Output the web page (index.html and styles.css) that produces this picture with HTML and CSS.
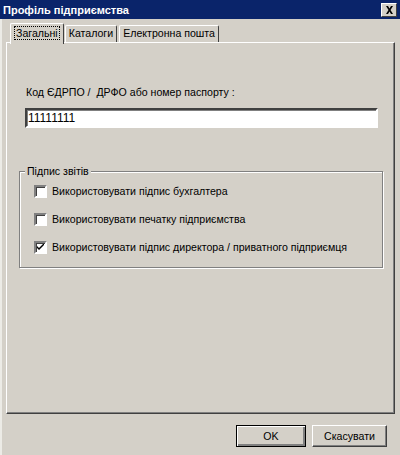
FILE: index.html
```html
<html>
<head>
<meta charset="utf-8">
<link rel="stylesheet" href="styles.css">
</head>
<body>
<div class="window">
  <div class="titlebar">
    <span class="title">Профіль підприємства</span>
    <span class="close">
      <svg width="9" height="8" viewBox="0 0 9 8"><path d="M1 0h2l1.5 2.5L6 0h2L5.5 4 8 8H6L4.5 5.5 3 8H1l2.5-4z" fill="#000"/></svg>
    </span>
  </div>

  <div class="tabs">
    <div class="tab active"><span class="focus">Загальні</span></div>
    <div class="tab">Каталоги</div>
    <div class="tab">Електронна пошта</div>
  </div>

  <div class="panel">
    <p class="field_label">Код ЄДРПО /&nbsp; ДРФО або номер паспорту :</p>
    <div class="edit">11111111</div>

    <div class="group">
      <span class="group_title">Підпис звітів</span>
      <div class="check_row"><span class="check"></span>Використовувати підпис бухгалтера</div>
      <div class="check_row"><span class="check"></span>Використовувати печатку підприємства</div>
      <div class="check_row"><span class="check checked">
        <svg width="7" height="7" viewBox="0 0 7 7"><path d="M0 2v2l2 2 5-5V-1L2 4z" fill="#000"/></svg>
      </span>Використовувати підпис директора / приватного підприємця</div>
    </div>
  </div>

  <div class="buttons">
    <button class="btn default">OK</button>
    <button class="btn cancel">Скасувати</button>
  </div>
</div>
</body>
</html>
```

FILE: styles.css
```css
body{
  margin: 0;
  background-color: #d4d0c8;
  font-family: 'Liberation Sans', Arial, sans-serif;
  font-size: 10.6px;
  color: #000;
}

.window{
  width: 400px;
  height: 455px;
  display: flex;
  flex-direction: column;
  box-sizing: border-box;
  border-left: 2px solid #ecebe6;
}

.titlebar{
  height: 19px;
  margin-left: -2px;
  background-color: #0a246a;
  display: flex;
  align-items: center;
  justify-content: space-between;
  padding: 0 3px 0 3px;
}
.title{
  color: white;
  font-weight: bold;
  font-size: 11px;
}
.close{
  width: 14px;
  height: 12px;
  background: #d4d0c8;
  border: 1px solid;
  border-color: #fff #404040 #404040 #fff;
  display: flex;
  align-items: center;
  justify-content: center;
  margin-top: 1px;
}

.tabs{
  display: flex;
  align-items: flex-end;
  height: 19px;
  margin-top: 4px;
  padding-left: 8px;
  position: relative;
  z-index: 1;
}
.tab{
  height: 17px;
  line-height: 15px;
  padding: 0 3px;
  margin-right: 2px;
  border: 1px solid;
  border-bottom: none;
  border-color: #fff #404040 #404040 #fff;
  border-radius: 2px 2px 0 0;
  box-sizing: border-box;
}
.tab.active{
  height: 21px;
  margin-bottom: -2px;
  margin-right: 1px;
  padding: 2px 4px 0;
  background: #d4d0c8;
}
.focus{
  outline: 1px dotted #000;
  padding: 0 1px;
}

.panel{
  margin-left: 4px;
  width: 389px;
  height: 372px;
  box-sizing: border-box;
  border: 1px solid;
  border-color: #fff #404040 #404040 #fff;
  box-shadow: inset -1px -1px 0 #808080;
  padding: 43px 0 0 18px;
}

.field_label{
  margin: 0 0 9px 1px;
  line-height: 13px;
}

.edit{
  width: 353px;
  height: 20px;
  box-sizing: border-box;
  background: #fff;
  border: 2px solid;
  border-color: #404040 #fff #fff #404040;
  box-shadow: inset 1px 1px 0 #808080;
  font-size: 12px;
  line-height: 16px;
  padding-left: 1px;
}

.group{
  position: relative;
  margin: 43px 0 0 -6px;
  width: 364px;
  height: 97px;
  box-sizing: border-box;
  border: 1px solid #808080;
  box-shadow: 1px 1px 0 #fff, inset 1px 1px 0 #fff;
  padding-top: 13px;
  padding-left: 14px;
}
.group_title{
  position: absolute;
  top: -7px;
  left: 5px;
  padding: 0 2px;
  background: #d4d0c8;
  line-height: 13px;
}

.check_row{
  display: flex;
  align-items: center;
  height: 13px;
  margin-bottom: 15px;
  line-height: 13px;
}
.check{
  width: 13px;
  height: 13px;
  box-sizing: border-box;
  background: #fff;
  border: 2px solid;
  border-color: #808080 #fff #fff #808080;
  box-shadow: inset 1px 1px 0 #404040;
  margin-right: 5px;
  display: flex;
  align-items: center;
  justify-content: center;
}

.buttons{
  display: flex;
  justify-content: flex-end;
  gap: 6px;
  padding: 11px 13px 0 0;
}
.btn{
  height: 22px;
  box-sizing: border-box;
  background: #d4d0c8;
  font-family: 'Liberation Sans', Arial, sans-serif;
  font-size: 10.6px;
  border: 1px solid;
  border-color: #fff #404040 #404040 #fff;
  box-shadow: inset -1px -1px 0 #808080;
  padding: 0;
}
.btn.default{
  width: 70px;
  border: 1px solid #000;
  box-shadow: inset 1px 1px 0 #fff, inset -2px -2px 0 #808080;
}
.btn.cancel{
  width: 75px;
}
```
